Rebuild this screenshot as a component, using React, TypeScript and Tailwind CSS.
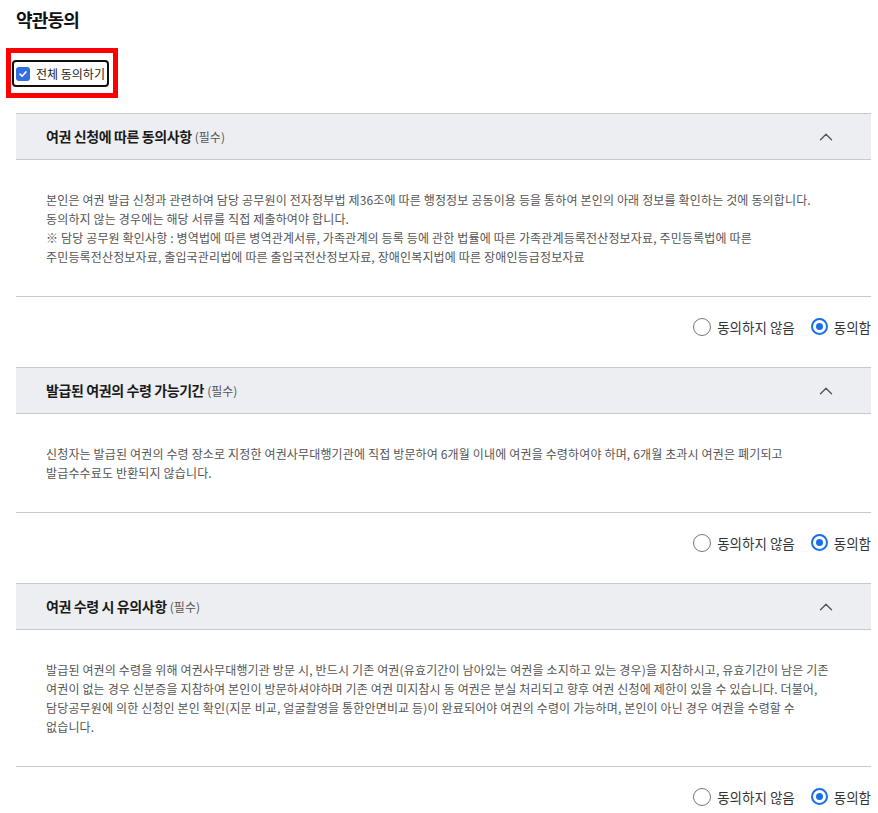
import React, { useState } from 'react';
import { ChevronUp } from 'lucide-react';

type Term = {
  id: string;
  title: string;
  lines: string[];
};

const terms: Term[] = [
  {
    id: 'apply',
    title: '여권 신청에 따른 동의사항',
    lines: [
      '본인은 여권 발급 신청과 관련하여 담당 공무원이 전자정부법 제36조에 따른 행정정보 공동이용 등을 통하여 본인의 아래 정보를 확인하는 것에 동의합니다.',
      '동의하지 않는 경우에는 해당 서류를 직접 제출하여야 합니다.',
      '※ 담당 공무원 확인사항 : 병역법에 따른 병역관계서류, 가족관계의 등록 등에 관한 법률에 따른 가족관계등록전산정보자료, 주민등록법에 따른',
      '주민등록전산정보자료, 출입국관리법에 따른 출입국전산정보자료, 장애인복지법에 따른 장애인등급정보자료',
    ],
  },
  {
    id: 'period',
    title: '발급된 여권의 수령 가능기간',
    lines: [
      '신청자는 발급된 여권의 수령 장소로 지정한 여권사무대행기관에 직접 방문하여 6개월 이내에 여권을 수령하여야 하며, 6개월 초과시 여권은 폐기되고',
      '발급수수료도 반환되지 않습니다.',
    ],
  },
  {
    id: 'notice',
    title: '여권 수령 시 유의사항',
    lines: [
      '발급된 여권의 수령을 위해 여권사무대행기관 방문 시, 반드시 기존 여권(유효기간이 남아있는 여권을 소지하고 있는 경우)을 지참하시고, 유효기간이 남은 기존',
      '여권이 없는 경우 신분증을 지참하여 본인이 방문하셔야하며 기존 여권 미지참시 동 여권은 분실 처리되고 향후 여권 신청에 제한이 있을 수 있습니다. 더불어,',
      '담당공무원에 의한 신청인 본인 확인(지문 비교, 얼굴촬영을 통한안면비교 등)이 완료되어야 여권의 수령이 가능하며, 본인이 아닌 경우 여권을 수령할 수',
      '없습니다.',
    ],
  },
];

const Radio = ({ checked, label, onClick }: { checked: boolean; label: string; onClick: () => void }) => (
  <button type="button" onClick={onClick} className="flex items-center gap-[6px]">
    {checked ? (
      <span className="w-[17px] h-[17px] rounded-full border-2 border-[#1a6ee8] flex items-center justify-center">
        <span className="w-[7px] h-[7px] rounded-full bg-[#1a6ee8]" />
      </span>
    ) : (
      <span className="w-[18px] h-[18px] rounded-full border border-[#767676] bg-white" />
    )}
    <span className="text-[13.5px] leading-[20px] text-[#333]">{label}</span>
  </button>
);

const TermSection = ({ term }: { term: Term }) => {
  const [open, setOpen] = useState(true);
  const [agree, setAgree] = useState(true);

  return (
    <section>
      {/* Header */}
      <div className="h-[47px] border-y border-[#c9c9c9] bg-[#eceef2] flex items-center justify-between pl-[30px] pr-[34px]">
        <h3 className="text-[14px] leading-[20px] text-[#1a1a1a]">
          <span className="font-bold tracking-[-0.4px]">{term.title}</span>{' '}
          <span className="text-[12px] text-[#555]">(필수)</span>
        </h3>
        <button type="button" onClick={() => setOpen(!open)} className="text-[#555]">
          <ChevronUp size={22} strokeWidth={1.5} className={open ? '' : 'rotate-180'} />
        </button>
      </div>

      {/* Body */}
      {open && (
        <div className="border-b border-[#c9c9c9] pt-[30px] pb-[30px] px-[30px]">
          {term.lines.map((line, i) => (
            <p key={i} className="whitespace-nowrap text-[12px] leading-[19px] tracking-[0.15px] text-[#555]">
              {line}
            </p>
          ))}
        </div>
      )}

      {/* Radios */}
      <div className="flex justify-end items-center gap-[16px] pt-[21px] pb-[32px] h-[70px]">
        <Radio checked={!agree} label="동의하지 않음" onClick={() => setAgree(false)} />
        <Radio checked={agree} label="동의함" onClick={() => setAgree(true)} />
      </div>
    </section>
  );
};

export default function App() {
  const [all, setAll] = useState(true);

  return (
    <div className="min-h-screen bg-white font-['Noto_Sans_CJK_KR','Noto_Sans',sans-serif] pt-[7px]">
      <h2 className="pl-[16px] text-[18px] leading-[24px] font-bold tracking-[-0.8px] text-[#111]">약관동의</h2>

      {/* Select all */}
      <div className="mt-[17px] ml-[6px] inline-flex border-[5px] border-[#ff0000] pt-[7px] pb-[6px] pl-px pr-[4px]">
        <label className="flex items-center gap-[6px] h-[27px] border-2 border-[#111] rounded-[4px] pl-[2px] pr-[2px] cursor-pointer">
          <button
            type="button"
            onClick={() => setAll(!all)}
            className={`w-[14px] h-[14px] rounded-[3px] flex items-center justify-center ${all ? 'bg-[#2f6fe0]' : 'border border-[#767676] bg-white'}`}
          >
            {all && (
              <svg width="10" height="10" viewBox="0 0 10 10" fill="none">
                <path d="M2 5.2 4.1 7.2 8 2.9" stroke="white" strokeWidth="1.6" strokeLinecap="round" strokeLinejoin="round" />
              </svg>
            )}
          </button>
          <span className="text-[12px] leading-[18px] text-[#222]">전체 동의하기</span>
        </label>
      </div>

      <div className="mt-[15px] ml-[16px] mr-[7px]">
        {terms.map((t) => (
          <TermSection key={t.id} term={t} />
        ))}
      </div>
    </div>
  );
}
